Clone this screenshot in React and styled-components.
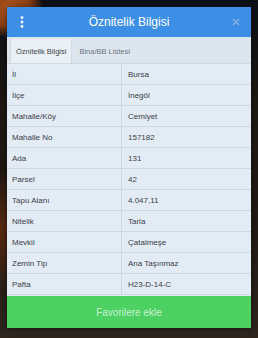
import React from "react";
import styled, { createGlobalStyle } from "styled-components";

const Global = createGlobalStyle`
  html, body { margin: 0; padding: 0; }
  body {
    width: 258px;
    height: 338px;
    overflow: hidden;
    font-family: "Liberation Sans", Arial, sans-serif;
    background:
      radial-gradient(ellipse 34px 30px at 10px 8px, #b2561c 0%, #8a3f14 60%, rgba(60,30,15,0) 100%),
      radial-gradient(ellipse 40px 60px at 0px 230px, #5a2a12 0%, rgba(40,25,15,0) 100%),
      linear-gradient(180deg, #0c0f16 0%, #1c1812 30%, #221a14 70%, #2e261e 100%);
  }
`;

const Dialog = styled.div`
  margin: 7px 7px 0 7px;
  width: 244px;
  display: flex;
  flex-direction: column;
  background: #e3ecf5;
  box-shadow: 0 0 6px rgba(0, 0, 0, 0.5);
`;

const Header = styled.div`
  height: 30px;
  background: #3d8fe6;
  display: grid;
  grid-template-columns: 30px 1fr 30px;
  align-items: center;
`;

const Title = styled.div`
  text-align: center;
  color: #ffffff;
  font-size: 12px;
`;

const IconCell = styled.div`
  display: flex;
  align-items: center;
  justify-content: center;
`;

const TabBar = styled.div`
  height: 27px;
  background: #dde5ed;
  display: flex;
  align-items: flex-end;
  padding-left: 3px;
  border-bottom: 1px solid #cfd9e3;
  box-sizing: border-box;
`;

const Tab = styled.div`
  height: 24px;
  display: flex;
  align-items: center;
  padding: 0 5px;
  font-size: 7.5px;
  color: ${(p) => (p.$active ? "#3c4650" : "#6c7885")};
  background: ${(p) => (p.$active ? "#eaf0f5" : "transparent")};
  border-right: ${(p) => (p.$active ? "1px solid #cfd9e3" : "none")};
  border-left: ${(p) => (p.$active ? "1px solid #cfd9e3" : "none")};
  margin-right: ${(p) => (p.$active ? "2px" : "0")};
`;

const Table = styled.div`
  display: grid;
  grid-template-columns: 115px 1fr;
`;

const Cell = styled.div`
  height: 21px;
  box-sizing: border-box;
  display: flex;
  align-items: center;
  padding-left: ${(p) => (p.$value ? "6px" : "5px")};
  font-size: 8px;
  color: #3a4048;
  border-bottom: 1px solid #cdd8e2;
  border-right: ${(p) => (p.$value ? "none" : "1px solid #cdd8e2")};
`;

const Button = styled.div`
  height: 32px;
  margin-top: 1px;
  background: #4cd162;
  color: #c9f3cf;
  font-size: 10px;
  display: flex;
  align-items: center;
  justify-content: center;
`;

const rows = [
  ["İl", "Bursa"],
  ["İlçe", "İnegöl"],
  ["Mahalle/Köy", "Cemiyet"],
  ["Mahalle No", "157182"],
  ["Ada", "131"],
  ["Parsel", "42"],
  ["Tapu Alanı", "4.047,11"],
  ["Nitelik", "Tarla"],
  ["Mevkii", "Çatalmeşe"],
  ["Zemin Tip", "Ana Taşınmaz"],
  ["Pafta", "H23-D-14-C"],
];

export default function App() {
  return (
    <>
      <Global />
      <Dialog>
        <Header>
          <IconCell>
            <svg width="4" height="12" viewBox="0 0 4 12">
              <circle cx="2" cy="1.6" r="1.4" fill="#fff" />
              <circle cx="2" cy="6" r="1.4" fill="#fff" />
              <circle cx="2" cy="10.4" r="1.4" fill="#fff" />
            </svg>
          </IconCell>
          <Title>Öznitelik Bilgisi</Title>
          <IconCell>
            <svg width="8" height="8" viewBox="0 0 8 8">
              <path d="M1 1 L7 7 M7 1 L1 7" stroke="#7fb0e6" strokeWidth="1.6" />
            </svg>
          </IconCell>
        </Header>
        <TabBar>
          <Tab $active>Öznitelik Bilgisi</Tab>
          <Tab>Bina/BB Listesi</Tab>
        </TabBar>
        <Table>
          {rows.map(([k, v]) => (
            <React.Fragment key={k}>
              <Cell>{k}</Cell>
              <Cell $value>{v}</Cell>
            </React.Fragment>
          ))}
        </Table>
        <Button>Favorilere ekle</Button>
      </Dialog>
    </>
  );
}
